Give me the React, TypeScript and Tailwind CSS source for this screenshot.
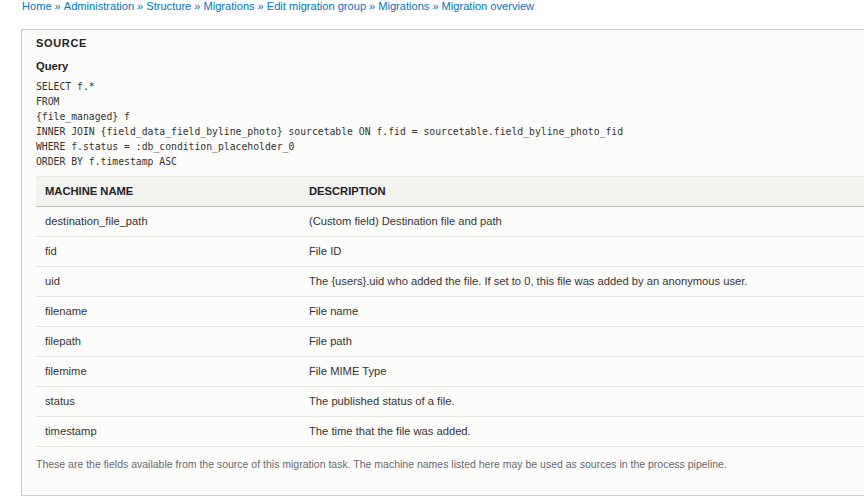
import React from 'react';

const crumbs = ['Home', 'Administration', 'Structure', 'Migrations', 'Edit migration group', 'Migrations', 'Migration overview'];

const query = [
  'SELECT f.*',
  'FROM',
  '{file_managed} f',
  'INNER JOIN {field_data_field_byline_photo} sourcetable ON f.fid = sourcetable.field_byline_photo_fid',
  'WHERE f.status = :db_condition_placeholder_0',
  'ORDER BY f.timestamp ASC',
];

const fields = [
  ['destination_file_path', '(Custom field) Destination file and path'],
  ['fid', 'File ID'],
  ['uid', 'The {users}.uid who added the file. If set to 0, this file was added by an anonymous user.'],
  ['filename', 'File name'],
  ['filepath', 'File path'],
  ['filemime', 'File MIME Type'],
  ['status', 'The published status of a file.'],
  ['timestamp', 'The time that the file was added.'],
];

const App: React.FC = () => {
  return (
    <div className="w-[864px] h-[496px] overflow-hidden bg-white text-[#333] font-['Liberation_Sans',Arial,sans-serif] text-[11.2px]">
      <nav className="pl-[22px] pt-0 h-[29px] text-[11.1px] leading-[13px] text-[#0074bd]">
        {crumbs.map((c, i) => (
          <span key={i}>
            {i > 0 && <span className="mx-[3px]">»</span>}
            <a href="#" className="hover:underline">{c}</a>
          </span>
        ))}
      </nav>

      <div className="ml-[21px] w-[1100px] border border-[#ccc] bg-[#fcfcfa] pl-[14px] pt-[6px] pb-[24px]">
        <h2 className="font-bold uppercase tracking-[0.06em] leading-[14px] text-[11px] text-[#222]">Source</h2>

        <h3 className="mt-[9px] font-bold leading-[14px] text-[#222]">Query</h3>
        <pre className="mt-[6px] font-['DejaVu_Sans_Mono',monospace] text-[9.75px] leading-[15px] text-[#333]">
          {query.join('\n')}
        </pre>

        <table className="mt-[7px] w-[900px] border-collapse text-left">
          <thead>
            <tr className="h-[30px] bg-[#f2f2ef] border-t border-[#e6e4df] border-b border-b-[#bfbfba]">
              <th className="w-[264px] pl-[9px] font-bold uppercase text-[#222]">Machine name</th>
              <th className="pl-[9px] font-bold uppercase text-[#222]">Description</th>
            </tr>
          </thead>
          <tbody>
            {fields.map(([name, desc]) => (
              <tr key={name} className="h-[30px] border-b border-[#e6e4df]">
                <td className="pl-[9px]">{name}</td>
                <td className="pl-[9px]">{desc}</td>
              </tr>
            ))}
          </tbody>
        </table>

        <p className="mt-[10px] text-[10.5px] leading-[14px] text-[#68686e]">
          These are the fields available from the source of this migration task. The machine names listed here may be used as sources in the process pipeline.
        </p>
      </div>
    </div>
  );
};

export default App;
